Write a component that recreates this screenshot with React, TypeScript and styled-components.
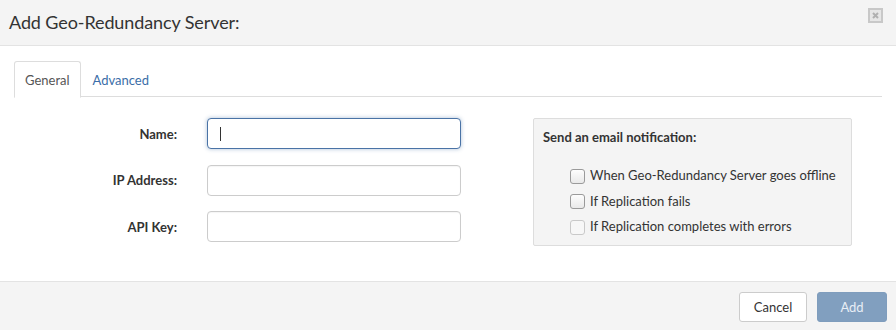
import React from "react";
import styled, { createGlobalStyle } from "styled-components";

const Global = createGlobalStyle`
  html, body { margin: 0; padding: 0; background: #fff; }
  body { font-family: Lato, "Open Sans", sans-serif; color: #333; }
  * { box-sizing: border-box; }
`;

const Dialog = styled.div`
  width: 896px;
  height: 330px;
  display: flex;
  flex-direction: column;
  background: #fff;
`;

const Header = styled.div`
  height: 46px;
  flex: none;
  background: #f4f4f4;
  border-bottom: 1px solid #e3e3e3;
  display: flex;
  align-items: center;
  justify-content: space-between;
  padding: 0 13px 0 9px;
`;

const Title = styled.h1`
  margin: 0;
  font-size: 18px;
  font-weight: 400;
  color: #333;
  letter-spacing: -0.1px;
  position: relative;
  top: -1px;
`;

const CloseBtn = styled.button`
  width: 16px;
  height: 16px;
  padding: 0;
  border: none;
  background: transparent;
  display: flex;
  align-items: center;
  justify-content: center;
  position: relative;
  top: -7px;
`;

const Body = styled.div`
  flex: 1;
  padding: 15px 14px 0 14px;
`;

const TabBar = styled.div`
  display: flex;
  border-bottom: 1px solid #ddd;
  height: 36px;
  gap: 1px;
`;

const Tab = styled.div<{ $active?: boolean }>`
  height: 37px;
  padding: 0 10px;
  display: flex;
  align-items: center;
  font-size: 13px;
  color: ${(p) => (p.$active ? "#555" : "#3b6ea8")};
  background: ${(p) => (p.$active ? "#fff" : "transparent")};
  border: 1px solid ${(p) => (p.$active ? "#ddd" : "transparent")};
  border-bottom-color: ${(p) => (p.$active ? "#fff" : "transparent")};
  border-radius: 3px 3px 0 0;
  margin-bottom: -1px;
`;

const Content = styled.div`
  display: flex;
  padding-top: 21px;
`;

const Form = styled.div`
  display: flex;
  flex-direction: column;
  gap: 15.5px;
  width: 519px;
`;

const Row = styled.div`
  display: grid;
  grid-template-columns: 163px 254px;
  column-gap: 30px;
  align-items: center;
`;

const Label = styled.label`
  text-align: right;
  font-size: 13px;
  font-weight: 700;
  color: #333;
`;

const Input = styled.div<{ $focus?: boolean }>`
  height: 31px;
  border: 1px solid ${(p) => (p.$focus ? "#4a73a6" : "#ccc")};
  border-radius: 4px;
  background: #fff;
  box-shadow: ${(p) =>
    p.$focus ? "0 0 4px rgba(74,115,166,0.45)" : "inset 0 1px 1px rgba(0,0,0,0.04)"};
  display: flex;
  align-items: center;
  padding-left: 12px;
`;

const Caret = styled.span`
  width: 1px;
  height: 14px;
  background: #333;
`;

const Panel = styled.div`
  width: 319px;
  height: 128px;
  background: #f4f4f4;
  border: 1px solid #ddd;
  border-radius: 2px;
  padding: 10px 10px 0 9px;
`;

const PanelTitle = styled.div`
  font-size: 13px;
  font-weight: 700;
  color: #333;
  line-height: 16px;
`;

const CheckList = styled.div`
  display: flex;
  flex-direction: column;
  gap: 7.5px;
  margin-top: 21px;
  padding-left: 27px;
`;

const CheckRow = styled.label`
  display: flex;
  align-items: center;
  gap: 5px;
  font-size: 13px;
  color: #333;
  line-height: 18px;
`;

const Box = styled.span<{ $disabled?: boolean }>`
  width: 15px;
  height: 15px;
  border: 1px solid ${(p) => (p.$disabled ? "#c9c9c9" : "#9a9a9a")};
  border-radius: 3px;
  background: ${(p) =>
    p.$disabled ? "#f7f7f7" : "linear-gradient(#fdfdfd, #e9e9e9)"};
  margin-top: 2px;
`;

const Footer = styled.div`
  height: 49px;
  flex: none;
  background: #f4f4f4;
  border-top: 1px solid #e3e3e3;
  display: flex;
  align-items: center;
  justify-content: flex-end;
  gap: 10px;
  padding: 0 9px 0 0;
`;

const Button = styled.button<{ $primary?: boolean }>`
  height: 30px;
  padding: 0;
  width: ${(p) => (p.$primary ? "70px" : "68px")};
  font-family: Lato, sans-serif;
  font-size: 13px;
  border-radius: 3px;
  border: 1px solid ${(p) => (p.$primary ? "#7f9dbd" : "#ccc")};
  background: ${(p) => (p.$primary ? "#819fbf" : "#fff")};
  color: ${(p) => (p.$primary ? "#e8eef5" : "#333")};
  position: relative;
  top: 1px;
`;

export default function App() {
  return (
    <>
      <Global />
      <Dialog>
        <Header>
          <Title>Add Geo-Redundancy Server:</Title>
          <CloseBtn aria-label="Close">
            <svg width="15" height="15" viewBox="0 0 15 15">
              <rect x="1" y="1" width="13" height="13" fill="#e6e6e6" stroke="#c8c8c8" strokeWidth="2" />
              <path d="M5 5 L10 10 M10 5 L5 10" stroke="#b0b0b0" strokeWidth="2" />
            </svg>
          </CloseBtn>
        </Header>
        <Body>
          <TabBar>
            <Tab $active>General</Tab>
            <Tab>Advanced</Tab>
          </TabBar>
          <Content>
            <Form>
              <Row>
                <Label>Name:</Label>
                <Input $focus>
                  <Caret />
                </Input>
              </Row>
              <Row>
                <Label>IP Address:</Label>
                <Input />
              </Row>
              <Row>
                <Label>API Key:</Label>
                <Input />
              </Row>
            </Form>
            <Panel>
              <PanelTitle>Send an email notification:</PanelTitle>
              <CheckList>
                <CheckRow>
                  <Box />
                  When Geo-Redundancy Server goes offline
                </CheckRow>
                <CheckRow>
                  <Box />
                  If Replication fails
                </CheckRow>
                <CheckRow>
                  <Box $disabled />
                  If Replication completes with errors
                </CheckRow>
              </CheckList>
            </Panel>
          </Content>
        </Body>
        <Footer>
          <Button>Cancel</Button>
          <Button $primary>Add</Button>
        </Footer>
      </Dialog>
    </>
  );
}
